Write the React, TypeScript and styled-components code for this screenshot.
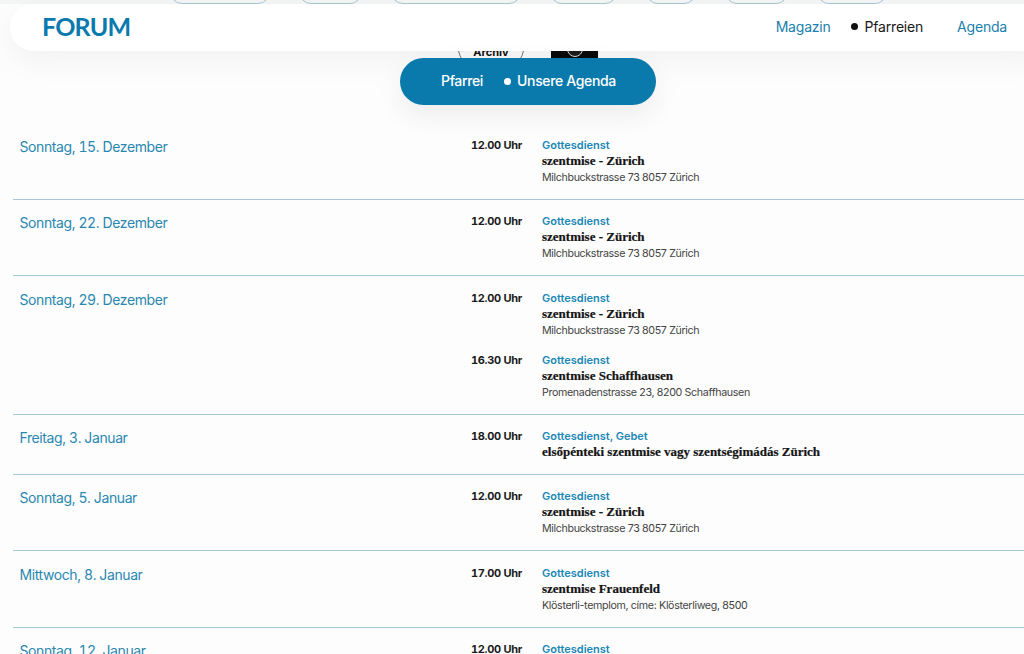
import React from "react";
import styled, { createGlobalStyle } from "styled-components";

const GlobalStyle = createGlobalStyle`
  html, body {
    margin: 0;
    padding: 0;
    background: #fdfdfd;
    overflow: hidden;
  }
  body {
    font-family: Inter, "Liberation Sans", sans-serif;
  }
`;

const Page = styled.div`
  position: relative;
  width: 1024px;
  height: 654px;
  overflow: hidden;
`;

const FilterStrip = styled.div`
  height: 4px;
  display: flex;
  background: #f4f5f5;
  padding-left: 170px;
  gap: 29px;
  overflow: hidden;
`;

const FilterPill = styled.div<{ $w: number }>`
  width: ${(p) => p.$w}px;
  height: 24px;
  margin-top: -20px;
  flex-shrink: 0;
  border: 1px solid #a9c6d3;
  border-radius: 12px;
  box-sizing: border-box;
`;

const Header = styled.header`
  position: absolute;
  top: 4px;
  left: 10px;
  right: -30px;
  height: 47px;
  display: flex;
  align-items: center;
  justify-content: space-between;
  box-sizing: border-box;
  padding: 0 47px 2px 32px;
  background: #fff;
  border-radius: 24px;
  box-shadow: 0 10px 30px rgba(0, 0, 0, 0.05);
  z-index: 3;
`;

const Logo = styled.div`
  font-family: Lato, sans-serif;
  font-weight: 700;
  font-size: 25px;
  letter-spacing: -0.8px;
  margin-bottom: 2px;
  color: #0a7aad;
`;

const Nav = styled.nav`
  display: flex;
  align-items: center;
  font-size: 14px;
  letter-spacing: -0.2px;
`;

const NavLink = styled.a<{ $active?: boolean }>`
  display: flex;
  align-items: center;
  color: ${(p) => (p.$active ? "#1a1a1a" : "#1a80ad")};
  margin-left: ${(p) => (p.$active ? "20px" : "34px")};
  &:first-child {
    margin-left: 0;
  }
  &::before {
    content: "";
    display: ${(p) => (p.$active ? "block" : "none")};
    width: 7px;
    height: 7px;
    margin-right: 7px;
    border-radius: 50%;
    background: #111;
  }
`;

const SubNav = styled.div`
  position: absolute;
  top: 58px;
  left: 400px;
  width: 256px;
  height: 47px;
  display: flex;
  align-items: center;
  padding: 0 0 2px 41px;
  box-sizing: border-box;
  border-radius: 24px;
  background: #0a7aad;
  color: #fff;
  font-size: 14px;
  font-weight: 500;
  letter-spacing: -0.35px;
  box-shadow: 0 10px 28px rgba(0, 0, 0, 0.07);
  z-index: 3;
`;

const SubDot = styled.span`
  width: 7px;
  height: 7px;
  margin: 2px 6px 0 21px;
  border-radius: 50%;
  background: #fff;
`;

const Hero = styled.div`
  height: 115px;
  display: flex;
  gap: 26px;
  padding: 5px 0 0 457px;
  box-sizing: border-box;
`;

const Stamp = styled.div`
  width: 68px;
  height: 68px;
  box-sizing: border-box;
  border: 1px solid #777;
  border-radius: 50%;
  display: flex;
  justify-content: center;
  padding-top: 36px;
  font-size: 11px;
  line-height: 13px;
  font-weight: 700;
  color: #111;
`;

const BlackTile = styled.div`
  width: 47px;
  height: 60px;
  display: flex;
  justify-content: center;
  padding-top: 32px;
  box-sizing: border-box;
  background: #0b0b0b;
`;

const Lens = styled.div`
  width: 16px;
  height: 16px;
  box-sizing: border-box;
  border: 1.5px solid #ddd;
  border-radius: 50%;
  background: #1c1c1c;
`;

const List = styled.div`
  margin-left: 13px;
`;

const Row = styled.div`
  display: grid;
  grid-template-columns: 458px 1fr;
  padding: 13.3px 0 14px;
  border-bottom: 1px solid #a5cad6;
  &:first-child {
    padding-top: 18px;
    padding-bottom: 14px;
  }
`;

const DateCell = styled.div`
  padding-left: 6.5px;
  font-size: 14px;
  line-height: 19px;
  letter-spacing: -0.4px;
  font-variant-numeric: tabular-nums;
  color: #2a87b0;
`;

const Slots = styled.div`
  display: flex;
  flex-direction: column;
  gap: 14.2px;
`;

const Slot = styled.div`
  display: grid;
  grid-template-columns: 71px 1fr;
`;

const Time = styled.div`
  font-size: 11px;
  line-height: 16px;
  font-weight: 700;
  letter-spacing: -0.3px;
  font-variant-numeric: tabular-nums;
  color: #1a1a1a;
`;

const Category = styled.div`
  font-size: 11px;
  line-height: 16px;
  font-weight: 600;
  color: #1a87b5;
`;

const Title = styled.div`
  font-family: "Liberation Serif", serif;
  font-size: 13px;
  line-height: 16px;
  font-weight: 700;
  -webkit-text-stroke: 0.2px #141414;
  color: #141414;
`;

const Address = styled.div`
  font-size: 10.7px;
  line-height: 16px;
  letter-spacing: -0.36px;
  padding-top: 1px;
  margin-bottom: -1px;
  color: #444;
`;

type Event = { time: string; category: string; title: string; address?: string };
type Day = { date: string; events: Event[] };

const zurich = "Milchbuckstrasse 73 8057 Zürich";

const days: Day[] = [
  { date: "Sonntag, 15. Dezember", events: [{ time: "12.00 Uhr", category: "Gottesdienst", title: "szentmise - Zürich", address: zurich }] },
  { date: "Sonntag, 22. Dezember", events: [{ time: "12.00 Uhr", category: "Gottesdienst", title: "szentmise - Zürich", address: zurich }] },
  {
    date: "Sonntag, 29. Dezember",
    events: [
      { time: "12.00 Uhr", category: "Gottesdienst", title: "szentmise - Zürich", address: zurich },
      { time: "16.30 Uhr", category: "Gottesdienst", title: "szentmise Schaffhausen", address: "Promenadenstrasse 23, 8200 Schaffhausen" },
    ],
  },
  { date: "Freitag, 3. Januar", events: [{ time: "18.00 Uhr", category: "Gottesdienst, Gebet", title: "elsőpénteki szentmise vagy szentségimádás Zürich" }] },
  { date: "Sonntag, 5. Januar", events: [{ time: "12.00 Uhr", category: "Gottesdienst", title: "szentmise - Zürich", address: zurich }] },
  { date: "Mittwoch, 8. Januar", events: [{ time: "17.00 Uhr", category: "Gottesdienst", title: "szentmise Frauenfeld", address: "Klösterli-templom, címe: Klösterliweg, 8500" }] },
  { date: "Sonntag, 12. Januar", events: [{ time: "12.00 Uhr", category: "Gottesdienst", title: "szentmise - Zürich", address: zurich }] },
];

const pills = [100, 63, 130, 67, 50, 63, 70];

const App = () => (
  <Page>
    <GlobalStyle />
    <FilterStrip>
      {pills.map((w, i) => (
        <FilterPill key={i} $w={w} />
      ))}
    </FilterStrip>
    <Header>
      <Logo>FORUM</Logo>
      <Nav>
        <NavLink>Magazin</NavLink>
        <NavLink $active>Pfarreien</NavLink>
        <NavLink>Agenda</NavLink>
      </Nav>
    </Header>
    <SubNav>
      Pfarrei
      <SubDot />
      Unsere Agenda
    </SubNav>
    <Hero>
      <Stamp>Archiv</Stamp>
      <BlackTile>
        <Lens />
      </BlackTile>
    </Hero>
    <List>
      {days.map((day) => (
        <Row key={day.date}>
          <DateCell>{day.date}</DateCell>
          <Slots>
            {day.events.map((ev) => (
              <Slot key={ev.time}>
                <Time>{ev.time}</Time>
                <div>
                  <Category>{ev.category}</Category>
                  <Title>{ev.title}</Title>
                  {ev.address && <Address>{ev.address}</Address>}
                </div>
              </Slot>
            ))}
          </Slots>
        </Row>
      ))}
    </List>
  </Page>
);

export default App;
